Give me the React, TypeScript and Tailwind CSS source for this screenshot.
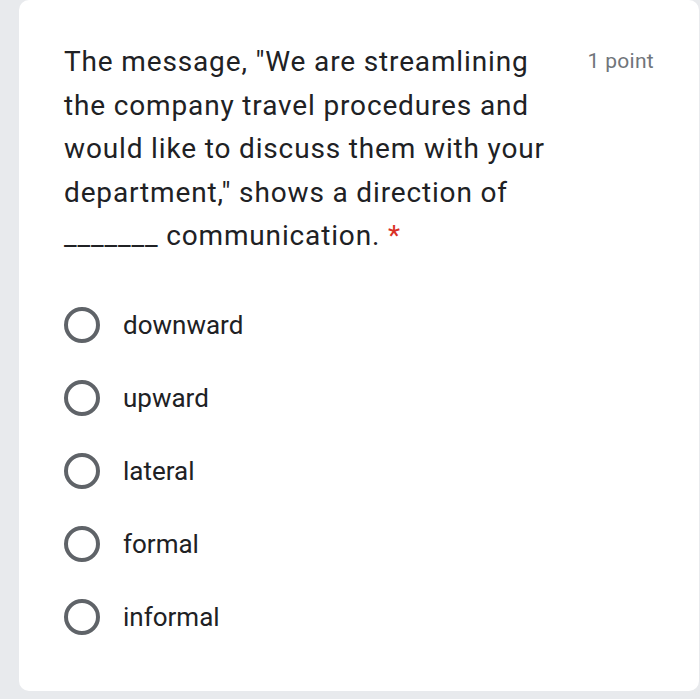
import React from "react";

const options = ["downward", "upward", "lateral", "formal", "informal"];

export default function App() {
  return (
    <div className="w-[700px] h-[699px] bg-[#e8eaed] overflow-hidden" style={{ fontFamily: "Roboto, 'Liberation Sans', sans-serif" }}>
      <div className="ml-[19px] mr-[1px] h-[691px] bg-white rounded-[10px] pl-[45px] pr-[45px] pt-[40px]">
        <div className="flex items-start justify-between">
          <div className="w-[492px] text-[28px] leading-[43.5px] text-[#202124] tracking-[0.85px]">
            The message, "We are streamlining the company travel procedures and would like to discuss them with your department," shows a direction of _______ communication. <span className="text-[#d93025]">*</span>
          </div>
          <div className="text-[21px] leading-[43.5px] text-[#70757a] tracking-[0.3px]">1 point</div>
        </div>
        <div className="mt-[49px] flex flex-col gap-[37px]">
          {options.map((o) => (
            <div key={o} className="flex items-center h-[36px]">
              <div className="w-[36px] h-[36px] rounded-full border-[4px] border-[#5f6368] shrink-0" />
              <div className="ml-[23px] text-[26px] text-[#202124] leading-[36px]">{o}</div>
            </div>
          ))}
        </div>
      </div>
    </div>
  );
}
